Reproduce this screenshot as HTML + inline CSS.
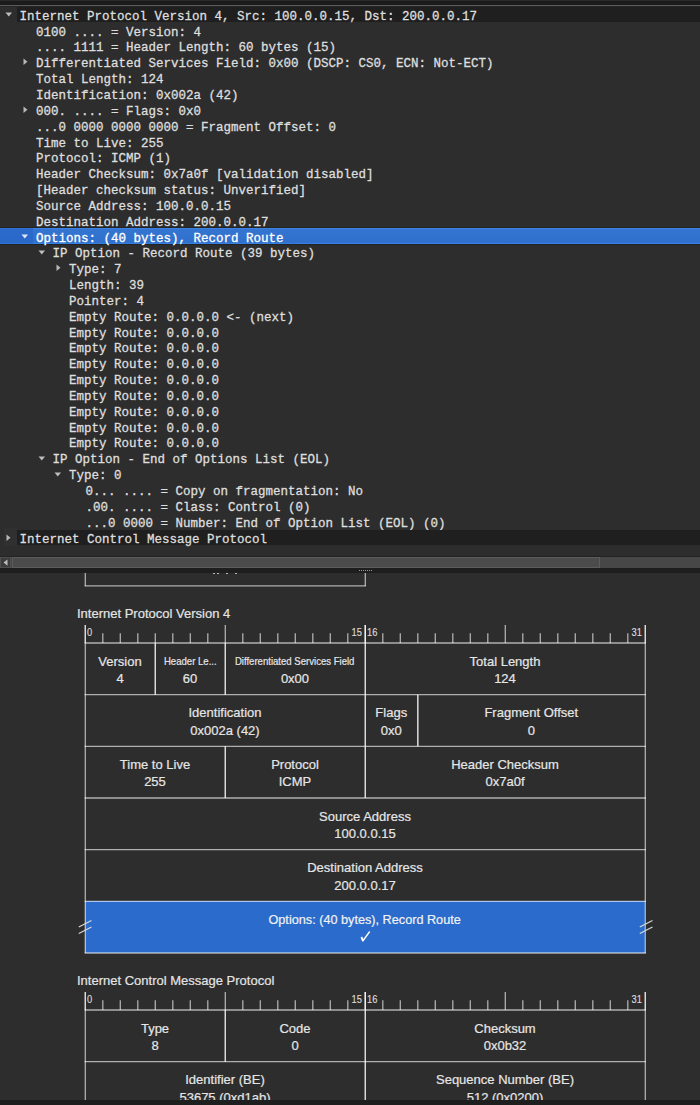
<!DOCTYPE html>
<html><head><meta charset="utf-8"><style>
*{margin:0;padding:0;box-sizing:border-box}
html,body{width:700px;height:1105px;overflow:hidden;background:#2d2d2d}
body{position:relative;font-family:"Liberation Sans",sans-serif;color:#dcdcdc}
.a{position:absolute}
.tr{position:absolute;left:0;width:700px;height:15.85px}
.tt{position:absolute;top:0;font-family:"Liberation Mono",monospace;font-size:12.5px;line-height:15.85px;white-space:pre;color:#e4e4e4;-webkit-text-stroke:0.3px currentColor}
.ar{position:absolute}
.ln{position:absolute;background:rgba(255,255,255,0.58)}
.fn{position:absolute;text-align:center;white-space:nowrap;font-size:13px;line-height:16px;color:#e6e6e6;-webkit-text-stroke:0.2px currentColor}
.lb{position:absolute;font-size:11px;line-height:12px;color:#dcdcdc;white-space:nowrap;-webkit-text-stroke:0.15px currentColor}
.sm{font-size:11px}
</style></head><body>

<div class="a" style="left:0;top:0;width:700px;height:1px;background:#2a2a2a"></div>
<div class="a" style="left:0;top:1px;width:700px;height:4px;background:#1b1b1b"></div>
<div class="a" style="left:0;top:5px;width:700px;height:1px;background:#5a5a5a"></div>
<div class="a" style="left:0;top:6px;width:700px;height:1px;background:#262626"></div>
<div class="tr" style="top:7.00px;left:17px;width:683px;height:15px;background:#1f1f1f"></div>
<svg class="ar" style="left:4.5px;top:12.30px" width="8" height="6" viewBox="0 0 8 6"><polygon points="0.5,0.5 7,0.5 3.75,4.5" fill="#bdbdbd"/></svg>
<div class="tt" style="left:19.5px;top:10px;color:#dedede">Internet Protocol Version 4, Src: 100.0.0.15, Dst: 200.0.0.17</div>
<div class="tt" style="left:36.0px;top:26px;color:#dedede">0100 .... = Version: 4</div>
<div class="tt" style="left:36.0px;top:41px;color:#dedede">.... 1111 = Header Length: 60 bytes (15)</div>
<svg class="ar" style="left:22.8px;top:58.15px" width="6" height="8" viewBox="0 0 6 8"><polygon points="0.5,0.5 4.5,3.75 0.5,7" fill="#b8b8b8"/></svg>
<div class="tt" style="left:36.0px;top:57px;color:#dedede">Differentiated Services Field: 0x00 (DSCP: CS0, ECN: Not-ECT)</div>
<div class="tt" style="left:36.0px;top:73px;color:#dedede">Total Length: 124</div>
<div class="tt" style="left:36.0px;top:89px;color:#dedede">Identification: 0x002a (42)</div>
<svg class="ar" style="left:22.8px;top:105.70px" width="6" height="8" viewBox="0 0 6 8"><polygon points="0.5,0.5 4.5,3.75 0.5,7" fill="#b8b8b8"/></svg>
<div class="tt" style="left:36.0px;top:105px;color:#dedede">000. .... = Flags: 0x0</div>
<div class="tt" style="left:36.0px;top:121px;color:#dedede">...0 0000 0000 0000 = Fragment Offset: 0</div>
<div class="tt" style="left:36.0px;top:137px;color:#dedede">Time to Live: 255</div>
<div class="tt" style="left:36.0px;top:152px;color:#dedede">Protocol: ICMP (1)</div>
<div class="tt" style="left:36.0px;top:168px;color:#dedede">Header Checksum: 0x7a0f [validation disabled]</div>
<div class="tt" style="left:36.0px;top:184px;color:#dedede">[Header checksum status: Unverified]</div>
<div class="tt" style="left:36.0px;top:200px;color:#dedede">Source Address: 100.0.0.15</div>
<div class="tt" style="left:36.0px;top:216px;color:#dedede">Destination Address: 200.0.0.17</div>
<div class="a" style="left:0;top:227px;width:700px;height:1px;background:#232323"></div>
<div class="a" style="left:0;top:244px;width:700px;height:1px;background:#232323"></div>
<div class="a" style="left:0;top:228px;width:700px;height:16px;background:linear-gradient(#3b82e2,#3b82e2 1px,#3475d2 1px,#3070cc 15px,#3580e0 15px)"></div>
<div class="a" style="left:0;top:228px;width:33px;height:16px;background:linear-gradient(#2f70d4,#2f70d4 1px,#2b6acb 1px,#2a68c8 15px,#2e74d8 15px)"></div>
<svg class="ar" style="left:21.0px;top:234.20px" width="8" height="6" viewBox="0 0 8 6"><polygon points="0.5,0.5 7,0.5 3.75,4.5" fill="#dfe8f6"/></svg>
<div class="tt" style="left:36.0px;top:232px;color:#ffffff">Options: (40 bytes), Record Route</div>
<svg class="ar" style="left:37.5px;top:250.05px" width="8" height="6" viewBox="0 0 8 6"><polygon points="0.5,0.5 7,0.5 3.75,4.5" fill="#bdbdbd"/></svg>
<div class="tt" style="left:52.5px;top:247px;color:#dedede">IP Option - Record Route (39 bytes)</div>
<svg class="ar" style="left:55.8px;top:264.20px" width="6" height="8" viewBox="0 0 6 8"><polygon points="0.5,0.5 4.5,3.75 0.5,7" fill="#b8b8b8"/></svg>
<div class="tt" style="left:69.0px;top:263px;color:#dedede">Type: 7</div>
<div class="tt" style="left:69.0px;top:279px;color:#dedede">Length: 39</div>
<div class="tt" style="left:69.0px;top:295px;color:#dedede">Pointer: 4</div>
<div class="tt" style="left:69.0px;top:311px;color:#dedede">Empty Route: 0.0.0.0 &lt;- (next)</div>
<div class="tt" style="left:69.0px;top:327px;color:#dedede">Empty Route: 0.0.0.0</div>
<div class="tt" style="left:69.0px;top:342px;color:#dedede">Empty Route: 0.0.0.0</div>
<div class="tt" style="left:69.0px;top:358px;color:#dedede">Empty Route: 0.0.0.0</div>
<div class="tt" style="left:69.0px;top:374px;color:#dedede">Empty Route: 0.0.0.0</div>
<div class="tt" style="left:69.0px;top:390px;color:#dedede">Empty Route: 0.0.0.0</div>
<div class="tt" style="left:69.0px;top:406px;color:#dedede">Empty Route: 0.0.0.0</div>
<div class="tt" style="left:69.0px;top:422px;color:#dedede">Empty Route: 0.0.0.0</div>
<div class="tt" style="left:69.0px;top:437px;color:#dedede">Empty Route: 0.0.0.0</div>
<svg class="ar" style="left:37.5px;top:456.10px" width="8" height="6" viewBox="0 0 8 6"><polygon points="0.5,0.5 7,0.5 3.75,4.5" fill="#bdbdbd"/></svg>
<div class="tt" style="left:52.5px;top:453px;color:#dedede">IP Option - End of Options List (EOL)</div>
<svg class="ar" style="left:54.0px;top:471.95px" width="8" height="6" viewBox="0 0 8 6"><polygon points="0.5,0.5 7,0.5 3.75,4.5" fill="#bdbdbd"/></svg>
<div class="tt" style="left:69.0px;top:469px;color:#dedede">Type: 0</div>
<div class="tt" style="left:85.5px;top:485px;color:#dedede">0... .... = Copy on fragmentation: No</div>
<div class="tt" style="left:85.5px;top:501px;color:#dedede">.00. .... = Class: Control (0)</div>
<div class="tt" style="left:85.5px;top:517px;color:#dedede">...0 0000 = Number: End of Option List (EOL) (0)</div>
<div class="a" style="left:4px;top:528px;width:13px;height:18px;background:#303030"></div>
<div class="tr" style="top:530.05px;left:17px;width:683px;height:15px;background:#1f1f1f"></div>
<svg class="ar" style="left:6.3px;top:533.65px" width="6" height="8" viewBox="0 0 6 8"><polygon points="0.5,0.5 4.5,3.75 0.5,7" fill="#b8b8b8"/></svg>
<div class="tt" style="left:19.5px;top:533px;color:#dedede">Internet Control Message Protocol</div>
<div class="a" style="left:0;top:556px;width:700px;height:1px;background:#222"></div>
<div class="a" style="left:0;top:557px;width:700px;height:11px;background:#474747"></div>
<div class="a" style="left:0;top:557px;width:11px;height:11px;background:#3c3c3c;border:1px solid #505050"></div>
<svg class="a" style="left:2.5px;top:558.5px" width="5" height="8" viewBox="0 0 5 8"><polygon points="4.5,0.5 4.5,6.8 0.5,3.6" fill="#bdbdbd"/></svg>
<div class="a" style="left:12px;top:557px;width:588px;height:11px;background:#4b4b4b;border:1px solid #5c5c5c"></div>
<div class="a" style="left:0;top:568px;width:700px;height:5px;background:#1e1e1e"></div>
<div class="a" style="left:359px;top:570px;width:1px;height:1px;background:#9a9a9a"></div>
<div class="a" style="left:361px;top:570px;width:1px;height:1px;background:#9a9a9a"></div>
<div class="a" style="left:363px;top:570px;width:1px;height:1px;background:#9a9a9a"></div>
<div class="a" style="left:365px;top:570px;width:1px;height:1px;background:#9a9a9a"></div>
<div class="a" style="left:367px;top:570px;width:1px;height:1px;background:#9a9a9a"></div>
<div class="a" style="left:369px;top:570px;width:1px;height:1px;background:#9a9a9a"></div>
<div class="a" style="left:371px;top:570px;width:1px;height:1px;background:#9a9a9a"></div>
<div class="a" style="left:213.3px;top:573px;width:2px;height:1px;background:#b8b8b8"></div>
<div class="a" style="left:217.0px;top:573px;width:2px;height:1px;background:#b8b8b8"></div>
<div class="a" style="left:225.9px;top:573px;width:2px;height:1px;background:#b8b8b8"></div>
<div class="a" style="left:234.7px;top:573px;width:2px;height:1px;background:#b8b8b8"></div>
<div class="a" style="left:77px;top:606px;font-size:13px;line-height:16px;color:#e4e4e4;white-space:nowrap;-webkit-text-stroke:0.2px currentColor">Internet Protocol Version 4</div>
<div class="lb" style="left:86.5px;top:626px;transform:scaleX(0.85);transform-origin:0 0">0</div>
<div class="lb" style="left:332px;top:626px;width:30px;text-align:right;transform:scaleX(0.85);transform-origin:100% 0">15</div>
<div class="lb" style="left:366.5px;top:626px;transform:scaleX(0.85);transform-origin:0 0">16</div>
<div class="lb" style="left:612px;top:626px;width:30px;text-align:right;transform:scaleX(0.85);transform-origin:100% 0">31</div>
<div class="a" style="left:85px;top:901.3px;width:560px;height:51.7px;background:#2a6bcb"></div>
<div class="fn" style="left:85.0px;top:653.5px;width:70.0px"><span style="">Version</span></div>
<div class="fn" style="left:85.0px;top:671.0px;width:70.0px">4</div>
<div class="fn" style="left:155.0px;top:652.7px;width:70.0px"><span style="font-size:11px;display:inline-block;transform:scaleX(0.87)">Header Le...</span></div>
<div class="fn" style="left:155.0px;top:671.0px;width:70.0px">60</div>
<div class="fn" style="left:225.0px;top:652.7px;width:140.0px"><span style="font-size:11px;display:inline-block;transform:scaleX(0.87)">Differentiated Services Field</span></div>
<div class="fn" style="left:225.0px;top:671.0px;width:140.0px">0x00</div>
<div class="fn" style="left:365.0px;top:653.5px;width:280.0px"><span style="">Total Length</span></div>
<div class="fn" style="left:365.0px;top:671.0px;width:280.0px">124</div>
<div class="fn" style="left:85.0px;top:705.2px;width:280.0px"><span style="">Identification</span></div>
<div class="fn" style="left:85.0px;top:722.7px;width:280.0px">0x002a (42)</div>
<div class="fn" style="left:365.0px;top:705.2px;width:52.5px"><span style="">Flags</span></div>
<div class="fn" style="left:365.0px;top:722.7px;width:52.5px">0x0</div>
<div class="fn" style="left:417.5px;top:705.2px;width:227.5px"><span style="">Fragment Offset</span></div>
<div class="fn" style="left:417.5px;top:722.7px;width:227.5px">0</div>
<div class="fn" style="left:85.0px;top:756.8px;width:140.0px"><span style="">Time to Live</span></div>
<div class="fn" style="left:85.0px;top:774.3px;width:140.0px">255</div>
<div class="fn" style="left:225.0px;top:756.8px;width:140.0px"><span style="">Protocol</span></div>
<div class="fn" style="left:225.0px;top:774.3px;width:140.0px">ICMP</div>
<div class="fn" style="left:365.0px;top:756.8px;width:280.0px"><span style="">Header Checksum</span></div>
<div class="fn" style="left:365.0px;top:774.3px;width:280.0px">0x7a0f</div>
<div class="fn" style="left:85.0px;top:808.5px;width:560.0px"><span style="">Source Address</span></div>
<div class="fn" style="left:85.0px;top:826.0px;width:560.0px">100.0.0.15</div>
<div class="fn" style="left:85.0px;top:860.2px;width:560.0px"><span style="">Destination Address</span></div>
<div class="fn" style="left:85.0px;top:877.7px;width:560.0px">200.0.0.17</div>
<div class="fn" style="left:85.0px;top:912.1px;width:560.0px"><span style=""><span style="display:inline-block;transform:scaleX(0.975);color:#f2f2f2">Options: (40 bytes), Record Route</span></span></div>
<div class="fn" style="left:85.0px;top:929.6px;width:560.0px"></div>
<svg class="a" style="left:0;top:0" width="700" height="1105"><polygon points="360.6,937.6 362.1,936.6 363.3,939.0 369.2,931.0 370.2,931.9 363.4,941.4 362.2,941.4" fill="#ffffff"/></svg>
<div class="a" style="left:77px;top:973px;font-size:13px;line-height:16px;color:#e4e4e4;white-space:nowrap;-webkit-text-stroke:0.2px currentColor">Internet Control Message Protocol</div>
<div class="lb" style="left:86.5px;top:993px;transform:scaleX(0.85);transform-origin:0 0">0</div>
<div class="lb" style="left:332px;top:993px;width:30px;text-align:right;transform:scaleX(0.85);transform-origin:100% 0">15</div>
<div class="lb" style="left:366.5px;top:993px;transform:scaleX(0.85);transform-origin:0 0">16</div>
<div class="lb" style="left:612px;top:993px;width:30px;text-align:right;transform:scaleX(0.85);transform-origin:100% 0">31</div>
<div class="fn" style="left:85.0px;top:1020.5px;width:140.0px"><span style="">Type</span></div>
<div class="fn" style="left:85.0px;top:1038.0px;width:140.0px">8</div>
<div class="fn" style="left:225.0px;top:1020.5px;width:140.0px"><span style="">Code</span></div>
<div class="fn" style="left:225.0px;top:1038.0px;width:140.0px">0</div>
<div class="fn" style="left:365.0px;top:1020.5px;width:280.0px"><span style="">Checksum</span></div>
<div class="fn" style="left:365.0px;top:1038.0px;width:280.0px">0x0b32</div>
<div class="fn" style="left:85.0px;top:1072.2px;width:280.0px"><span style="">Identifier (BE)</span></div>
<div class="fn" style="left:85.0px;top:1089.7px;width:280.0px">53675 (0xd1ab)</div>
<div class="fn" style="left:365.0px;top:1072.2px;width:280.0px"><span style="">Sequence Number (BE)</span></div>
<div class="fn" style="left:365.0px;top:1089.7px;width:280.0px">512 (0x0200)</div>
<svg class="a" style="left:0;top:0" width="700" height="1105"><g stroke="rgba(255,255,255,0.62)" stroke-width="1.30" fill="none"><line x1="85.30" y1="573.00" x2="85.30" y2="586.00"/><line x1="365.30" y1="573.00" x2="365.30" y2="586.00"/><line x1="84.65" y1="585.90" x2="365.95" y2="585.90"/><line x1="85.30" y1="625.00" x2="85.30" y2="643.00"/><line x1="102.80" y1="633.30" x2="102.80" y2="643.00"/><line x1="120.30" y1="633.30" x2="120.30" y2="643.00"/><line x1="137.80" y1="633.30" x2="137.80" y2="643.00"/><line x1="155.30" y1="633.30" x2="155.30" y2="643.00"/><line x1="172.80" y1="633.30" x2="172.80" y2="643.00"/><line x1="190.30" y1="633.30" x2="190.30" y2="643.00"/><line x1="207.80" y1="633.30" x2="207.80" y2="643.00"/><line x1="225.30" y1="625.00" x2="225.30" y2="643.00"/><line x1="242.80" y1="633.30" x2="242.80" y2="643.00"/><line x1="260.30" y1="633.30" x2="260.30" y2="643.00"/><line x1="277.80" y1="633.30" x2="277.80" y2="643.00"/><line x1="295.30" y1="633.30" x2="295.30" y2="643.00"/><line x1="312.80" y1="633.30" x2="312.80" y2="643.00"/><line x1="330.30" y1="633.30" x2="330.30" y2="643.00"/><line x1="347.80" y1="633.30" x2="347.80" y2="643.00"/><line x1="365.30" y1="625.00" x2="365.30" y2="643.00"/><line x1="382.80" y1="633.30" x2="382.80" y2="643.00"/><line x1="400.30" y1="633.30" x2="400.30" y2="643.00"/><line x1="417.80" y1="633.30" x2="417.80" y2="643.00"/><line x1="435.30" y1="633.30" x2="435.30" y2="643.00"/><line x1="452.80" y1="633.30" x2="452.80" y2="643.00"/><line x1="470.30" y1="633.30" x2="470.30" y2="643.00"/><line x1="487.80" y1="633.30" x2="487.80" y2="643.00"/><line x1="505.30" y1="625.00" x2="505.30" y2="643.00"/><line x1="522.80" y1="633.30" x2="522.80" y2="643.00"/><line x1="540.30" y1="633.30" x2="540.30" y2="643.00"/><line x1="557.80" y1="633.30" x2="557.80" y2="643.00"/><line x1="575.30" y1="633.30" x2="575.30" y2="643.00"/><line x1="592.80" y1="633.30" x2="592.80" y2="643.00"/><line x1="610.30" y1="633.30" x2="610.30" y2="643.00"/><line x1="627.80" y1="633.30" x2="627.80" y2="643.00"/><line x1="645.30" y1="625.00" x2="645.30" y2="643.00"/><line x1="84.65" y1="643.00" x2="645.95" y2="643.00"/><line x1="84.65" y1="694.67" x2="645.95" y2="694.67"/><line x1="84.65" y1="746.33" x2="645.95" y2="746.33"/><line x1="84.65" y1="798.00" x2="645.95" y2="798.00"/><line x1="84.65" y1="849.67" x2="645.95" y2="849.67"/><line x1="84.65" y1="901.34" x2="645.95" y2="901.34"/><line x1="84.65" y1="953.00" x2="645.95" y2="953.00"/><line x1="85.30" y1="625.00" x2="85.30" y2="953.00"/><line x1="645.30" y1="625.00" x2="645.30" y2="953.00"/><line x1="155.30" y1="643.00" x2="155.30" y2="694.67"/><line x1="155.30" y1="643.00" x2="155.30" y2="694.67"/><line x1="225.30" y1="643.00" x2="225.30" y2="694.67"/><line x1="225.30" y1="643.00" x2="225.30" y2="694.67"/><line x1="365.30" y1="625.00" x2="365.30" y2="694.67"/><line x1="365.30" y1="625.00" x2="365.30" y2="694.67"/><line x1="365.30" y1="694.67" x2="365.30" y2="746.33"/><line x1="365.30" y1="694.67" x2="365.30" y2="746.33"/><line x1="417.80" y1="694.67" x2="417.80" y2="746.33"/><line x1="417.80" y1="694.67" x2="417.80" y2="746.33"/><line x1="225.30" y1="746.33" x2="225.30" y2="798.00"/><line x1="225.30" y1="746.33" x2="225.30" y2="798.00"/><line x1="365.30" y1="746.33" x2="365.30" y2="798.00"/><line x1="365.30" y1="746.33" x2="365.30" y2="798.00"/><line x1="85.30" y1="992.00" x2="85.30" y2="1010.00"/><line x1="102.80" y1="1000.30" x2="102.80" y2="1010.00"/><line x1="120.30" y1="1000.30" x2="120.30" y2="1010.00"/><line x1="137.80" y1="1000.30" x2="137.80" y2="1010.00"/><line x1="155.30" y1="1000.30" x2="155.30" y2="1010.00"/><line x1="172.80" y1="1000.30" x2="172.80" y2="1010.00"/><line x1="190.30" y1="1000.30" x2="190.30" y2="1010.00"/><line x1="207.80" y1="1000.30" x2="207.80" y2="1010.00"/><line x1="225.30" y1="992.00" x2="225.30" y2="1010.00"/><line x1="242.80" y1="1000.30" x2="242.80" y2="1010.00"/><line x1="260.30" y1="1000.30" x2="260.30" y2="1010.00"/><line x1="277.80" y1="1000.30" x2="277.80" y2="1010.00"/><line x1="295.30" y1="1000.30" x2="295.30" y2="1010.00"/><line x1="312.80" y1="1000.30" x2="312.80" y2="1010.00"/><line x1="330.30" y1="1000.30" x2="330.30" y2="1010.00"/><line x1="347.80" y1="1000.30" x2="347.80" y2="1010.00"/><line x1="365.30" y1="992.00" x2="365.30" y2="1010.00"/><line x1="382.80" y1="1000.30" x2="382.80" y2="1010.00"/><line x1="400.30" y1="1000.30" x2="400.30" y2="1010.00"/><line x1="417.80" y1="1000.30" x2="417.80" y2="1010.00"/><line x1="435.30" y1="1000.30" x2="435.30" y2="1010.00"/><line x1="452.80" y1="1000.30" x2="452.80" y2="1010.00"/><line x1="470.30" y1="1000.30" x2="470.30" y2="1010.00"/><line x1="487.80" y1="1000.30" x2="487.80" y2="1010.00"/><line x1="505.30" y1="992.00" x2="505.30" y2="1010.00"/><line x1="522.80" y1="1000.30" x2="522.80" y2="1010.00"/><line x1="540.30" y1="1000.30" x2="540.30" y2="1010.00"/><line x1="557.80" y1="1000.30" x2="557.80" y2="1010.00"/><line x1="575.30" y1="1000.30" x2="575.30" y2="1010.00"/><line x1="592.80" y1="1000.30" x2="592.80" y2="1010.00"/><line x1="610.30" y1="1000.30" x2="610.30" y2="1010.00"/><line x1="627.80" y1="1000.30" x2="627.80" y2="1010.00"/><line x1="645.30" y1="992.00" x2="645.30" y2="1010.00"/><line x1="84.65" y1="1010.00" x2="645.95" y2="1010.00"/><line x1="84.65" y1="1061.67" x2="645.95" y2="1061.67"/><line x1="84.65" y1="1113.33" x2="645.95" y2="1113.33"/><line x1="85.30" y1="992.00" x2="85.30" y2="1105.00"/><line x1="645.30" y1="992.00" x2="645.30" y2="1105.00"/><line x1="225.30" y1="1010.00" x2="225.30" y2="1061.67"/><line x1="225.30" y1="1010.00" x2="225.30" y2="1061.67"/><line x1="365.30" y1="992.00" x2="365.30" y2="1105.00"/><line x1="365.30" y1="992.00" x2="365.30" y2="1105.00"/></g><g stroke="#d8d8d8" stroke-width="1.2"><line x1="78.8" y1="927" x2="91.5" y2="920.5" /><line x1="78.8" y1="933.5" x2="91.5" y2="927" /><line x1="639.8" y1="927" x2="652.5" y2="920.5" /><line x1="639.8" y1="933.5" x2="652.5" y2="927" /></g></svg>
<div class="a" style="left:0;top:1100px;width:700px;height:5px;background:#1e1e1e"></div>
</body></html>
